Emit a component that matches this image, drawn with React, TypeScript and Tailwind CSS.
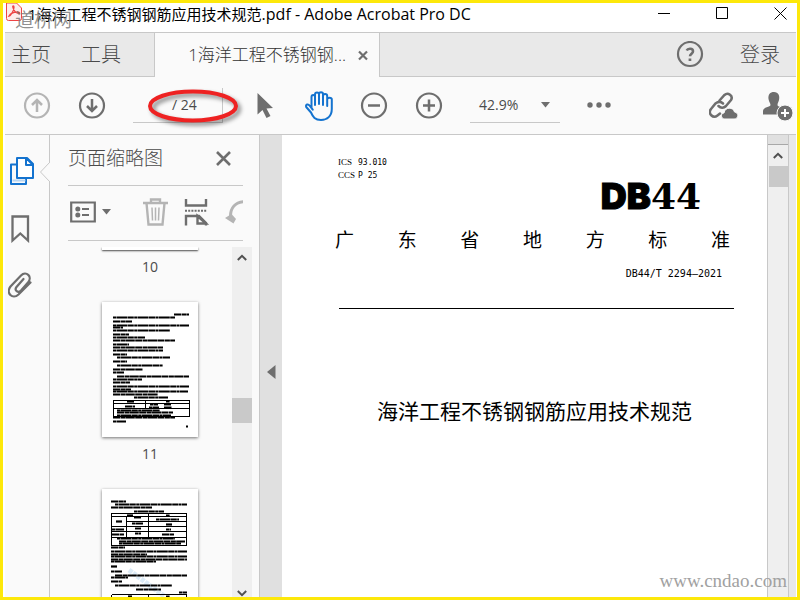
import type { ReactNode } from 'react';

const cjk = "font-['Open_Sans','Noto_Sans_CJK_SC',sans-serif]";

type Line = [x: number, y: number, w: number];

const pageElevenLines: Line[] = [
  [72, 12, 15], [11, 15, 62], [11, 19, 19], [11, 23, 76], [11, 25, 10], [11, 28, 57],
  [11, 32, 16], [11, 35, 32], [11, 38, 62], [11, 42, 16], [11, 45, 50], [11, 48, 50],
  [11, 52, 14], [15, 55, 53], [11, 59, 14], [15, 63, 46], [11, 67, 30], [11, 70, 11],
  [15, 74, 72], [11, 77, 29], [11, 80, 17], [11, 84, 76], [11, 87, 18], [11, 89, 75],
  [11, 92, 45], [32, 95, 34], [25, 99, 7], [64, 99, 4], [23, 104, 10], [48, 102, 8],
  [62, 102, 7], [47, 105, 10], [62, 105, 8], [15, 108, 43], [15, 110, 56], [15, 113, 54],
  [11, 115, 62], [11, 119, 13], [84, 124, 2],
];

const pageTwelveLines: Line[] = [
  [9, 12, 15], [13, 15, 72], [9, 18, 41], [32, 22, 30], [25, 26, 6], [64, 26, 4],
  [32, 28, 7], [54, 30, 23], [14, 32, 6], [30, 34, 11], [64, 35, 6], [10, 40, 12],
  [33, 39, 6], [64, 40, 5], [10, 45, 12], [33, 44, 6], [60, 45, 12], [15, 49, 58],
  [17, 52, 66], [17, 54, 62], [9, 58, 14], [9, 62, 76], [9, 65, 36], [9, 67, 76],
  [9, 70, 76], [9, 72, 45], [9, 77, 6], [9, 82, 11], [13, 86, 72], [9, 88, 17],
  [9, 92, 11], [13, 96, 57], [34, 100, 25], [77, 103, 8], [26, 107, 4], [64, 107, 4],
];

function Thumbnail({ lines, grid, watermark }: { lines: Line[]; grid: string; watermark?: boolean }) {
  return (
    <button className="w-24 h-[135px] bg-white shadow-[0_1px_3px_rgba(0,0,0,0.55)]">
      <svg viewBox="0 0 96 135" className="w-full h-full" fill="none" stroke="#000">
        {watermark && <path d="M27 81 L62 107" stroke="#dcebf7" strokeWidth="5" strokeDasharray="4 1" />}
        {lines.map(([x, y, w], i) => (
          <path
            key={i}
            d={`M${x} ${y + 0.5}h${w}`}
            strokeWidth={i % 3 === 0 ? 1.9 : 2.2}
            strokeDasharray={i % 2 === 0 ? '7 .5 5 .3 9 .4' : '3 .4 11 .4 6 .4'}
          />
        ))}
        <path d={grid} strokeWidth="1" shapeRendering="crispEdges" />
      </svg>
    </button>
  );
}

function IconButton({ label, children, className = 'w-7' }: { label: string; children: ReactNode; className?: string }) {
  return (
    <button aria-label={label} className={`${className} h-7 shrink-0 flex items-center justify-center`}>
      {children}
    </button>
  );
}

function CircleIcon({ d, color = '#6e6e6e' }: { d: string; color?: string }) {
  return (
    <svg width="28" height="28" viewBox="0 0 28 28" fill="none" stroke={color} strokeWidth="2.2">
      <circle cx="14" cy="13.5" r="12" />
      <path d={d} strokeWidth="2.5" />
    </svg>
  );
}

function Chevron({ down }: { down?: boolean }) {
  return (
    <svg width="10" height="7" viewBox="0 0 10 7" fill="none" stroke="#505050" strokeWidth="2">
      <path d={down ? 'M.8 1 L5 5.2 L9.2 1' : 'M.8 6 L5 1.8 L9.2 6'} />
    </svg>
  );
}

function TitleBar() {
  return (
    <header className="relative h-[29px] shrink-0 flex items-start bg-white">
      <svg width="16" height="19" viewBox="0 0 16 19" fill="#fff" stroke="#ee4444" className="ml-px">
        <path d="M.5 0v15.500q0 2 2 2h11q2 0 2-2V5L10.500 0z" fill="#fdecec" />
        <path d="M3 13c2-.5 5-5.500 5-9 0-1.500-1.500-1.500-1.200 0 .5 3 3.200 6.500 6.200 6.500 1.500-.3 0-1.700-2-1.500-3 .2-6.500 1.500-8 4z" fill="none" strokeWidth="1.300" />
      </svg>
      <h1 className="ml-[6px] text-[15px] leading-[22px] text-black whitespace-nowrap">
        1海洋工程不锈钢钢筋应用技术规范<span className="text-base leading-[22px]">.pdf - Adobe Acrobat Pro DC</span>
      </h1>
      <div className="ml-auto flex h-5 pr-[9px] gap-[45px] text-black">
        <button aria-label="最小化">
          <svg width="13" height="13" viewBox="0 0 13 13" stroke="currentColor"><path d="M0 6.500h12" /></svg>
        </button>
        <button aria-label="最大化">
          <svg width="13" height="13" viewBox="0 0 13 13" fill="none" stroke="currentColor"><path d="M.5 .5h11v11H.5z" /></svg>
        </button>
        <button aria-label="关闭">
          <svg width="13" height="13" viewBox="0 0 13 13" stroke="currentColor"><path d="M.5 .5l12 12M12.500 .5l-12 12" /></svg>
        </button>
      </div>
      <span className="absolute left-2.5 top-[6px] text-[19px] leading-6 text-neutral-500/80 font-['Liberation_Serif','Noto_Sans_CJK_SC',serif]">
        道桥网
      </span>
    </header>
  );
}

function TabBar() {
  return (
    <nav className="flex h-[45px] shrink-0 bg-[#e9e9e9] border-t border-[#c8c8c8] text-[#4b4b4b] font-light">
      <div className="flex w-[150px] gap-[30px] pl-[6px] text-xl items-center border-b border-r border-[#c8c8c8]">
        <button>主页</button>
        <button>工具</button>
      </div>
      <div className="flex w-[224px] items-center justify-end gap-3 pr-[11px] bg-[#fafafa] text-[17px] text-[#323232]">
        <span className="whitespace-nowrap">1海洋工程不锈钢钢...</span>
        <button aria-label="关闭标签">
          <svg width="10" height="11" viewBox="0 0 10 11" stroke="#6e6e6e" strokeWidth="2.200"><path d="M1 1.500l8 8M9 1.500l-8 8" /></svg>
        </button>
      </div>
      <div className="flex-1 flex items-center justify-end gap-9 pr-4 text-xl border-l border-b border-[#c8c8c8]">
        <IconButton label="帮助">
          <svg width="28" height="28" viewBox="0 0 28 28" fill="none" stroke="#6e6e6e" strokeWidth="2.200">
            <circle cx="14" cy="13" r="12" />
            <path d="M10.700 9.500c1-2.300 6.300-2.600 6.300.8 0 2.400-3 2.400-3 5" strokeWidth="2.600" />
            <path d="M12.600 17.500h2.700v2.500h-2.700z" fill="#6e6e6e" stroke="none" />
          </svg>
        </IconButton>
        <button>登录</button>
      </div>
    </nav>
  );
}

function Toolbar() {
  return (
    <div className="flex h-[58px] shrink-0 items-center gap-[27px] pl-[18px] pr-[3px] bg-[#fafafa] border-b border-[#c8c8c8] text-[#4b4b4b]">
      <IconButton label="上一页"><CircleIcon color="#b4b4b4" d="M14 20V8M9 13l5-5 5 5" /></IconButton>
      <IconButton label="下一页"><CircleIcon d="M14 7v12M9 14l5 5 5-5" /></IconButton>
      <div className="relative flex w-[90px] h-[35px] shrink-0 items-center border-b border-r border-[#c8c8c8]">
        <input aria-label="页码" className="w-[39px] h-full bg-transparent outline-none text-sm" />
        <span className="text-sm">/ 24</span>
        <svg width="100" height="42" viewBox="0 0 100 42" fill="none" className="absolute left-[12px] -top-px drop-shadow-[3px_3px_2px_rgba(0,0,0,0.45)]">
          <ellipse cx="48" cy="19" rx="43" ry="14.500" stroke="#ee2222" strokeWidth="4" />
        </svg>
      </div>
      <IconButton label="选择">
        <svg width="28" height="28" viewBox="0 0 28 28" fill="#6e6e6e">
          <path d="M7.500 1v21.500l5-4.500 4 8 4-2-4-7.500 6.500-.5z" />
        </svg>
      </IconButton>
      <IconButton label="手形工具">
        <svg width="28" height="30" viewBox="0 0 28 30" fill="none" stroke="#1473cf" strokeWidth="2" strokeLinecap="round" strokeLinejoin="round">
          <path d="M6.500 17V6c0-2.700 3.500-2.700 3.500 0v8M10 13V3.500c0-2.700 4-2.700 4 0V13M14 13V3c0-2.400 4-2.400 4 0v11M18 5c0-2.700 4.200-2.700 4.200 0v10M22.200 8.500c0-2.500 4.600-2.500 4.600 0V18c0 7-4.600 11-10.800 11-6 0-8-3-10-7.500L1.200 16c-.9-2.700 2-3.500 3.500-1.300l3 4" />
        </svg>
      </IconButton>
      <IconButton label="缩小"><CircleIcon d="M8 13.500h12" /></IconButton>
      <IconButton label="放大"><CircleIcon d="M8 13.500h12M14 7.500v12" /></IconButton>
      <button className="flex w-[90px] h-[35px] shrink-0 items-center justify-between pl-[9px] pr-[10px] border-b border-[#c8c8c8] text-sm">
        42.9%
        <svg width="9" height="6" viewBox="0 0 9 6" fill="#6e6e6e"><path d="M0 0h9L4.500 5.500z" /></svg>
      </button>
      <IconButton label="更多">
        <svg width="28" height="8" viewBox="0 0 28 8" fill="#6e6e6e">
          <circle cx="3" cy="3" r="2.700" /><circle cx="12" cy="3" r="2.700" /><circle cx="21" cy="3" r="2.700" />
        </svg>
      </IconButton>
      <div className="flex ml-auto gap-6">
        <IconButton label="共享链接" className="w-[30px]">
          <svg width="30" height="28" viewBox="0 0 30 28" fill="none" stroke="#6e6e6e" strokeWidth="2.500" strokeLinecap="round">
            <path d="M10.500 8.500l5-5.500c3.500-3.300 9 1 6.500 5l-5 6c-2.500 2.500-5.500 2-7.500 0" />
            <path d="M14 11.500c-2-2-5-2-7.500 0L2 17c-3.500 4.500 2 10 6.500 6.500l2.500-2" />
            <path d="M15.500 27c-4 0-4-6-.5-6 .8-6.500 9.500-6 10.500-1 4.500.5 4.500 7 0 7z" fill="#6e6e6e" stroke="#fafafa" strokeWidth="1" />
          </svg>
        </IconButton>
        <IconButton label="添加用户" className="w-[30px]">
          <svg width="30" height="30" viewBox="0 0 30 30" fill="#6e6e6e">
            <path d="M11 1c4.500 0 6 4 5 8-.6 2.400-1.500 3-1.500 5 0 2 6 2.500 7 5l.5 4.500H0V20c0-4 7.500-4 7.500-6S6 11 5.500 8C5 3.500 7 1 11 1z" />
            <circle cx="22" cy="22" r="8" fill="#6e6e6e" stroke="#fafafa" />
            <path d="M22 18v8M18 22h8" stroke="#fff" strokeWidth="2" />
          </svg>
        </IconButton>
      </div>
    </div>
  );
}

function SideRail() {
  return (
    <aside className="relative w-[45px] shrink-0 flex flex-col gap-[29px] pt-[22px] pl-[3px] border-r border-[#c8c8c8]">
      <IconButton label="页面缩略图">
        <svg width="26" height="30" viewBox="0 0 26 30" fill="#fff" stroke="#1473cf" strokeWidth="2" strokeLinejoin="round">
          <path d="M8 8.500H2V28h15v-5" fill="none" />
          <path d="M3.500 24.500h13" stroke="#b6d5f2" />
          <path d="M8 2h10l6 6v14H8z" />
          <path d="M17 2v7h7z" />
        </svg>
      </IconButton>
      <IconButton label="书签">
        <svg width="28" height="30" viewBox="0 0 28 30" fill="none" stroke="#6e6e6e" strokeWidth="2.300">
          <path d="M4.500 3.500h15.500v24l-7.700-7-7.800 7z" />
        </svg>
      </IconButton>
      <IconButton label="附件">
        <svg width="28" height="28" viewBox="0 0 28 28" fill="none" stroke="#6e6e6e" strokeWidth="2.200" strokeLinecap="round">
          <path d="M15.500 8l-7 8c-2.500 3.500 1.500 6.500 4.500 3.500l7-8c5-6-2-12-7-7L2.500 15.500C-2.500 22 4.500 29 10.500 23.500l12-12" />
        </svg>
      </IconButton>
      <svg width="10" height="20" viewBox="0 0 10 20" fill="#fafafa" stroke="#c8c8c8" className="absolute -right-px top-[27px]">
        <path d="M10 0L.5 10l9.500 10" />
      </svg>
    </aside>
  );
}

function PageLabel({ children }: { children: ReactNode }) {
  return <span className="pb-[18px] text-sm leading-[34px] text-[#4b4b4b]">{children}</span>;
}

function ThumbnailPanel() {
  return (
    <section className="flex flex-col w-[210px] shrink-0 border-r border-[#c8c8c8]">
      <div className="flex h-[51px] shrink-0 ml-[18px] mr-4 pr-3 pb-1 items-center justify-between border-b border-[#c8c8c8]">
        <h2 className="text-[19px] font-light text-[#4b4b4b]">页面缩略图</h2>
        <button aria-label="关闭面板">
          <svg width="15" height="15" viewBox="0 0 15 15" stroke="#6e6e6e" strokeWidth="2.600"><path d="M1 1l13 13M14 1L1 14" /></svg>
        </button>
      </div>
      <div className="flex h-[55px] shrink-0 ml-[18px] mr-4 pl-[2px] pb-[2px] items-center overflow-hidden border-b border-[#c8c8c8]">
        <button aria-label="选项" className="flex items-center gap-[6px]">
          <svg width="26" height="22" viewBox="0 0 26 22" fill="none" stroke="#6e6e6e" strokeWidth="2.200">
            <path d="M1.200 1.500h23.600v19H1.200z" />
            <path d="M12 8h7M12 14h7" />
            <circle cx="7.800" cy="8" r="2.500" fill="#6e6e6e" stroke="none" />
            <circle cx="7.800" cy="14" r="2.500" fill="#6e6e6e" stroke="none" />
          </svg>
          <svg width="9" height="6" viewBox="0 0 9 6" fill="#6e6e6e"><path d="M0 0h9L4.500 5.500z" /></svg>
        </button>
        <div className="w-px h-9 ml-[11px] mr-5 bg-[#c8c8c8]" />
        <div className="flex shrink-0 gap-[13px]">
          <IconButton label="删除页面">
            <svg width="28" height="28" viewBox="0 0 28 28" fill="none" stroke="#b4b4b4" strokeWidth="2">
              <path d="M1 5h25M9 5V1.500h9V5" strokeWidth="2.400" />
              <path d="M4.500 5l2 21.500h14l2-21.500" strokeWidth="2.400" />
              <path d="M10 9.500l.5 13M13.500 9.500v13M17 9.500l-.5 13" strokeWidth="1.500" />
            </svg>
          </IconButton>
          <IconButton label="拆分页面">
            <svg width="28" height="28" viewBox="0 0 28 28" fill="none" stroke="#6e6e6e" strokeWidth="2.400">
              <path d="M3 1v6.500h20V1M3 27.500V18h13l7 7v2.500" />
              <path d="M2 12.800h22" strokeDasharray="2 1.200" strokeWidth="2" />
              <path d="M14.500 18v7.500H23z" fill="#fafafa" />
            </svg>
          </IconButton>
          <IconButton label="逆时针旋转">
            <svg width="28" height="28" viewBox="0 0 28 28" fill="none" stroke="#b4b4b4" strokeWidth="3">
              <path d="M21 3.500C11 4 6.500 10 6.500 18" />
              <path d="M1 20l6.500-4 4.500 5-2.500 4.500z" fill="#b4b4b4" stroke="none" />
            </svg>
          </IconButton>
        </div>
      </div>
      <div className="flex flex-1 min-h-0 mt-[6px]">
        <div className="flex-1 min-w-0 flex flex-col items-center ml-[18px] overflow-hidden [&>*]:shrink-0">
          <div className="w-24 h-[3px] bg-white shadow-[0_1px_2px_rgba(0,0,0,0.7)]" />
          <PageLabel>10</PageLabel>
          <Thumbnail
            lines={pageElevenLines}
            grid="M11.500 98.500h76v16h-76zM11.500 101.500h76M11.500 106.500h76M43.500 98.500v8"
          />
          <PageLabel>11</PageLabel>
          <Thumbnail
            watermark
            lines={pageTwelveLines}
            grid="M9.500 24.500h75v32h-75zM9.500 27.500h75M24.500 32.500h60M9.500 37.500h75M9.500 42.500h75M9.500 48.500h75M24.500 27.500v21M46.500 24.500v24M9.500 105.500h75v20M9.500 105.500v20M46.500 105.500v20"
          />
        </div>
        <div className="flex flex-col justify-between items-center w-5 mr-[7px] py-[7px] pb-0 bg-[#efefef]">
          <Chevron />
          <div className="w-full h-[25px] mb-[30px] bg-[#c9c9c9]" />
          <Chevron down />
        </div>
      </div>
    </section>
  );
}

function DocumentPage() {
  return (
    <main className="flex-1 min-w-0 bg-white text-black pt-[21px] pl-[53px] pr-[33px]">
      <dl className="ml-[3px] grid grid-cols-[20px_1fr] text-[9px] leading-[13px] text-black">
        <dt className="font-['Liberation_Serif',serif]">ICS</dt>
        <dd className="text-[8px] font-['DejaVu_Sans_Mono',monospace]">93.010</dd>
        <dt className="font-['Liberation_Serif',serif]">CCS</dt>
        <dd className="text-[8px] font-['DejaVu_Sans_Mono',monospace]">P 25</dd>
      </dl>
      <p className="pr-[33px] text-right text-4xl leading-7">
        <span className="font-black font-['Inter',sans-serif] [-webkit-text-stroke:1px_#000]">DB</span>
        <span className="font-bold font-['DejaVu_Serif',serif]">44</span>
      </p>
      <p className="flex justify-between mt-4 pr-1 text-[19px] leading-7">
        {'广东省地方标准'.split('').map((char) => (
          <span key={char}>{char}</span>
        ))}
      </p>
      <p className="mt-3 pr-3 text-right text-[10px] leading-4 font-['DejaVu_Sans_Mono',monospace]">DB44/T 2294—2021</p>
      <hr className="mt-[26px] ml-1 border-black" />
      <h2 className="mt-[87px] text-center text-[21px] leading-[30px] whitespace-nowrap">海洋工程不锈钢钢筋应用技术规范</h2>
    </main>
  );
}

export default function App() {
  return (
    <div className={`relative h-screen flex flex-col overflow-hidden bg-white border-[3px] border-[#fde80a] pl-[2px] pr-px ${cjk}`}>
      <TitleBar />
      <TabBar />
      <Toolbar />
      <div className="flex flex-1 min-h-0 bg-[#fafafa]">
        <SideRail />
        <ThumbnailPanel />
        <button aria-label="折叠面板" className="w-[22px] shrink-0 flex items-center justify-center pt-3 bg-[#e0e0e0]">
          <svg width="9" height="14" viewBox="0 0 9 14" fill="#6e6e6e"><path d="M8.500 0v14L0 7z" /></svg>
        </button>
        <DocumentPage />
        <div className="flex flex-col items-center w-[22px] shrink-0 bg-[#efefef] border-x border-[#c8c8c8]">
          <div className="w-full h-[10px] bg-[#e0e0e0] border-b border-[#a8a8a8]" />
          <div className="flex h-[21px] items-center"><Chevron /></div>
          <div className="w-[19px] h-[21px] bg-[#c9c9c9]" />
        </div>
        <div className="w-[7px] shrink-0 bg-[#e8e8e8]" />
      </div>
      <span className="absolute right-2.5 bottom-1 text-[19px] leading-6 text-neutral-400 font-['Liberation_Serif',serif]">
        www.cndao.com
      </span>
    </div>
  );
}
